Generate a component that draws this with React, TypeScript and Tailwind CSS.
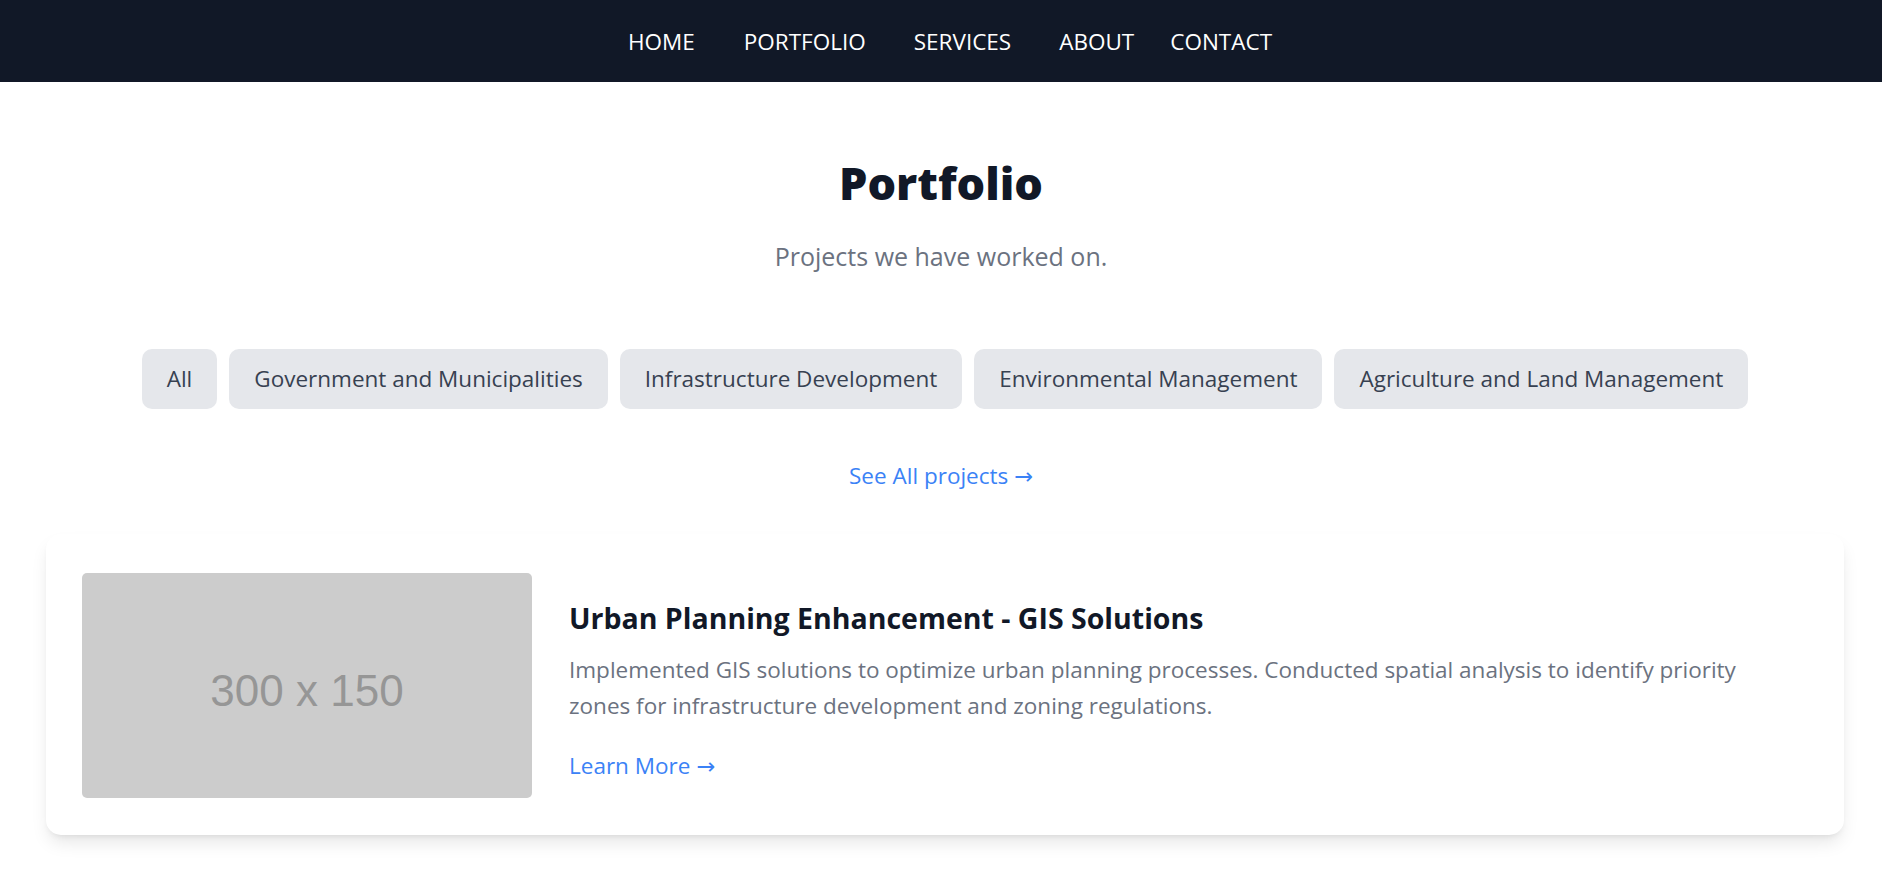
import React from 'react';

const navLinks = [
  { label: 'HOME', cls: 'mr-[49px]' },
  { label: 'PORTFOLIO', cls: 'mr-[48px]' },
  { label: 'SERVICES', cls: 'mr-[48px]' },
  { label: 'ABOUT', cls: 'mr-[36px]' },
  { label: 'CONTACT', cls: '' },
];

const filters = [
  'All',
  'Government and Municipalities',
  'Infrastructure Development',
  'Environmental Management',
  'Agriculture and Land Management',
];

const Arrow: React.FC = () => (
  <span className="font-['DejaVu_Sans',sans-serif]">→</span>
);

const Navbar: React.FC = () => (
  <nav className="h-[82px] bg-[#111827] flex items-center justify-center pl-[18px] pt-[2px]">
    {navLinks.map((link) => (
      <a key={link.label} href="#" className={`text-white text-[22.5px] leading-none ${link.cls}`}>
        {link.label}
      </a>
    ))}
  </nav>
);

const ProjectCard: React.FC = () => (
  <div className="ml-[46px] mr-[38px] bg-white rounded-[15px] shadow-[0_10px_18px_-3px_rgba(0,0,0,0.1),0_4px_7px_-4px_rgba(0,0,0,0.1)] pl-[36px] pr-[36px] pt-[39px] pb-[37px] flex items-center gap-[37px]">
    <div className="w-[450px] h-[225px] shrink-0 bg-[#cccccc] rounded-[5px] flex items-center justify-center pt-[10px]">
      <span className="text-[44px] text-[#969696] font-['Liberation_Sans',Arial,sans-serif]">300 x 150</span>
    </div>
    <div className="flex-1 pr-[20px] pt-[10px]">
      <h3 className="text-[28.5px] leading-[40px] font-bold text-[#111827]">Urban Planning Enhancement - GIS Solutions</h3>
      <p className="mt-[14px] text-[22.5px] leading-[36px] text-[#6b7280]">
        Implemented GIS solutions to optimize urban planning processes. Conducted spatial analysis to identify priority zones for infrastructure development and zoning regulations.
      </p>
      <a href="#" className="inline-block mt-[24px] text-[22.5px] leading-[35px] text-[#3b82f6]">
        Learn More <Arrow />
      </a>
    </div>
  </div>
);

export default function App() {
  return (
    <div className="min-h-screen bg-white font-['Open_Sans','Noto_Sans',sans-serif]">
      <Navbar />
      <section className="pt-[73px] pb-[40px]">
        <div className="text-center">
          <h1 className="text-[45px] leading-[56px] font-extrabold text-[#111827]">Portfolio</h1>
          <p className="mt-[28px] text-[25px] leading-[35px] text-[#6b7280]">Projects we have worked on.</p>
        </div>
        <div className="mt-[75px] flex justify-center gap-[12px] pl-[8px]">
          {filters.map((f) => (
            <button key={f} className="h-[60px] px-[25px] rounded-[10px] bg-[#e5e7eb] text-[#374151] text-[22.5px]">
              {f}
            </button>
          ))}
        </div>
        <div className="mt-[49px] text-center">
          <a href="#" className="text-[22.5px] leading-[35px] text-[#3b82f6]">
            See All projects <Arrow />
          </a>
        </div>
        <div className="mt-[40px]">
          <ProjectCard />
        </div>
      </section>
    </div>
  );
}
